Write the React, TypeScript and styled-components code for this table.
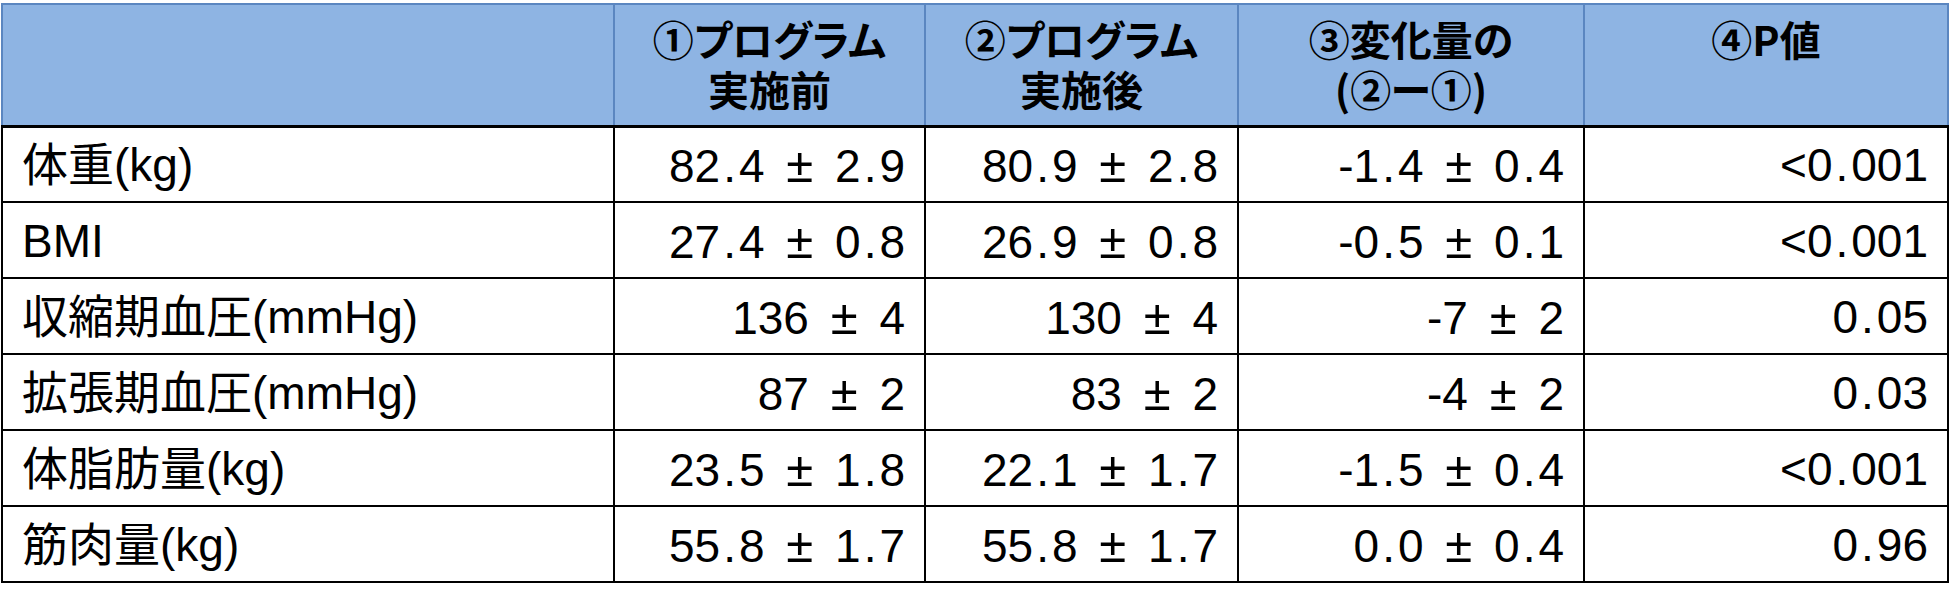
import React from 'react';
import styled, { createGlobalStyle } from 'styled-components';

const GlobalStyle = createGlobalStyle`
	html, body {
		margin: 0;
		padding: 0;
		background: #ffffff;
	}
`;

const Page = styled.div`
	padding: 3px 4px 0 1px;
	font-family: 'Liberation Sans', 'Noto Sans CJK JP', sans-serif;
	color: #000000;
`;

const Table = styled.table`
	width: 1945px;
	border-collapse: collapse;
	table-layout: fixed;
`;

const HeadRow = styled.tr`
	height: 122px;
`;

const HeadCell = styled.th`
	padding: 8px 0 0;
	background: #8eb4e3;
	border-top: 2px solid #5b86c0;
	border-left: 2px solid #5b86c0;
	border-right: 2px solid #5b86c0;
	border-bottom: 3px solid #000000;
	vertical-align: top;
	text-align: center;
	font-family: 'Noto Sans CJK JP', sans-serif;
	font-feature-settings: 'palt';
	font-weight: 700;
	font-size: 41px;
	line-height: 50px;
`;

const Row = styled.tr`
	height: 76px;
`;

const Cell = styled.td<{ $label?: boolean }>`
	border: 2px solid #000000;
	padding: ${(p) => (p.$label ? '2px 0 0 19px' : '2px 19px 0 0')};
	text-align: ${(p) => (p.$label ? 'left' : 'right')};
	vertical-align: middle;
	font-family: 'Liberation Sans', 'Noto Sans CJK JP', sans-serif;
	font-size: 46px;
	line-height: 1;
	white-space: nowrap;
`;

// the ± sign takes a full-width slot, as in the source sheet
const PlusMinus = styled.span`
	display: inline-block;
	margin: 0 9px;
	font-size: 49px;
`;

// decimal points are set a little wider than in Arial
const Dot = styled.span`
	margin: 0 3px;
`;

const columns = [612, 311, 313, 346, 364];

const headers = [
	[],
	['①プログラム', '実施前'],
	['②プログラム', '実施後'],
	['③変化量の', '(②ー①)'],
	['④P値'],
];

const rows = [
	['体重(kg)', '82.4 ± 2.9', '80.9 ± 2.8', '-1.4 ± 0.4', '<0.001'],
	['BMI', '27.4 ± 0.8', '26.9 ± 0.8', '-0.5 ± 0.1', '<0.001'],
	['収縮期血圧(mmHg)', '136 ± 4', '130 ± 4', '-7 ± 2', '0.05'],
	['拡張期血圧(mmHg)', '87 ± 2', '83 ± 2', '-4 ± 2', '0.03'],
	['体脂肪量(kg)', '23.5 ± 1.8', '22.1 ± 1.7', '-1.5 ± 0.4', '<0.001'],
	['筋肉量(kg)', '55.8 ± 1.7', '55.8 ± 1.7', '0.0 ± 0.4', '0.96'],
];

const renderValue = (value: string) =>
	value.split(/(±|\.)/).map((part, i) => {
		if (part === '±') return <PlusMinus key={i}>±</PlusMinus>;
		if (part === '.') return <Dot key={i}>.</Dot>;
		return part;
	});

const App = () => {
	return (
		<Page>
			<GlobalStyle />
			<Table>
				<colgroup>
					{columns.map((w, i) => (
						<col key={i} style={{ width: w }} />
					))}
				</colgroup>
				<thead>
					<HeadRow>
						{headers.map((lines, i) => (
							<HeadCell key={i}>
								{lines.map((line) => (
									<div key={line}>{line}</div>
								))}
							</HeadCell>
						))}
					</HeadRow>
				</thead>
				<tbody>
					{rows.map((row) => (
						<Row key={row[0]}>
							{row.map((value, i) => (
								<Cell key={i} $label={i === 0}>
									{i === 0 ? value : renderValue(value)}
								</Cell>
							))}
						</Row>
					))}
				</tbody>
			</Table>
		</Page>
	);
};

export default App;
